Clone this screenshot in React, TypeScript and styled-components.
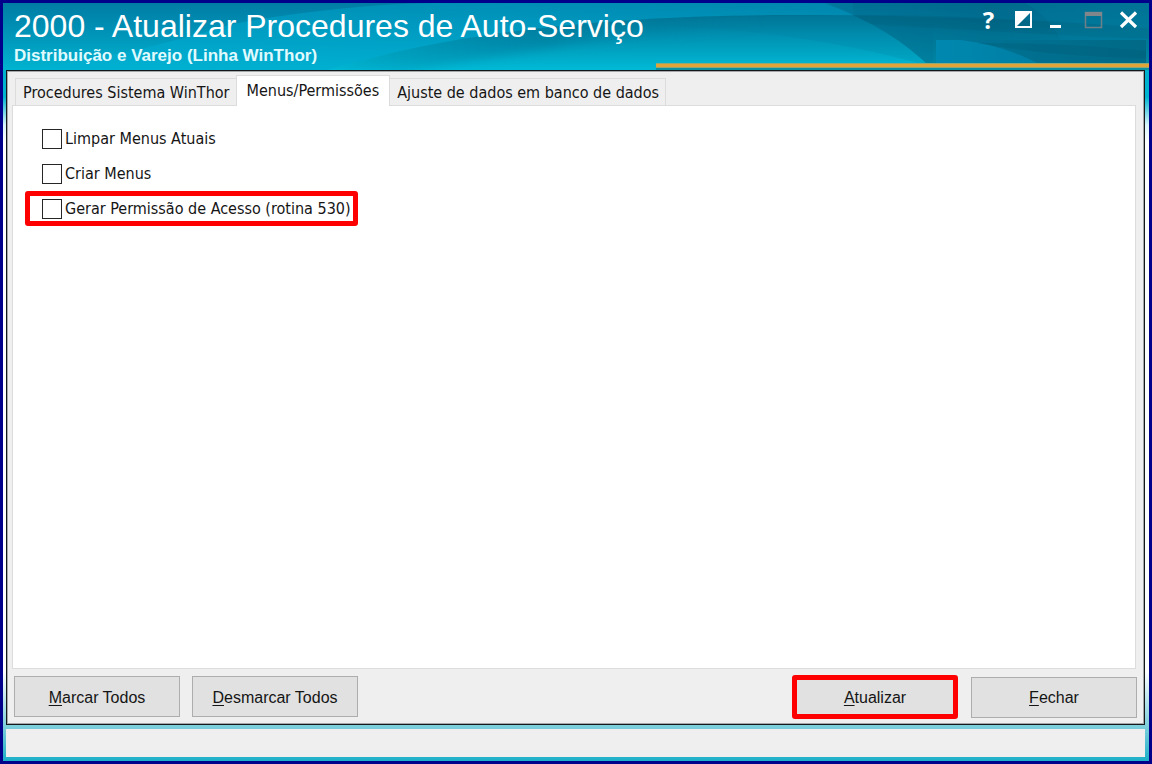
import React from "react";
import styled, { createGlobalStyle } from "styled-components";

const Global = createGlobalStyle`
  *, *::before, *::after { box-sizing: border-box; }
  body { margin: 0; }
`;

const uiFont = `"DejaVu Sans Condensed", "DejaVu Sans", Tahoma, sans-serif`;
const formFont = `"Liberation Sans", Arial, sans-serif`;

const Window = styled.div`
  display: flex;
  flex-direction: column;
  min-height: 100vh;
  border: 3px solid #00008b;
  padding: 0 4px 4px 3px;
  background: linear-gradient(
    #00a8c8 0,
    #00b4d0 94px,
    #d8f6fa 122px,
    #ffffff 140px,
    #ffffff calc(100% - 90px),
    #80d0dc calc(100% - 36px),
    #1cb0c8 100%
  );
  font-family: ${uiFont};
  font-size: 16px;
  color: #151515;
`;

const TitleBar = styled.header`
  position: relative;
  display: flex;
  justify-content: space-between;
  height: 67px;
  margin: 0 -4px 0 -3px;
  padding: 6px 8px 0 11px;
  color: #ffffff;
  font-family: ${formFont};
`;

const Waves = styled.svg`
  position: absolute;
  inset: 0;
  width: 100%;
  height: 100%;
`;

const Heading = styled.div`
  position: relative;
`;

const Title = styled.h1`
  margin: 0;
  font-size: 32px;
  line-height: 35px;
  font-weight: 400;
  white-space: nowrap;
`;

const Subtitle = styled.p`
  margin: 0;
  font-size: 17px;
  line-height: 24px;
  font-weight: 700;
  color: #e0fbff;
`;

const Controls = styled.div`
  position: relative;
  display: flex;
  height: 24px;
  gap: 10px;
`;

const ControlButton = styled.button`
  width: 25px;
  height: 24px;
  padding: 0 0 3px;
  border: 0;
  background: none;
  color: #ffffff;
  font-family: "Open Sans", sans-serif;
  font-size: 24px;
  line-height: 20px;
  font-weight: 700;
`;

const Glyph = styled.svg`
  display: block;
  width: 25px;
  height: 24px;
  margin-bottom: -3px;
`;

const Client = styled.main`
  flex: 1;
  display: flex;
  flex-direction: column;
  border: 1px solid #14181a;
  background: #efefef;
  box-shadow: inset 0 0 0 1px #a4a8a8;
  padding: 4px 7px 5px 5px;
`;

const TabList = styled.div`
  display: flex;
  align-items: flex-end;
  height: 30px;
  padding-left: 3px;
`;

const Tab = styled.button<{ $active?: boolean }>`
  position: relative;
  height: ${(p) => (p.$active ? 31 : 27)}px;
  padding: ${(p) => (p.$active ? "0 10px 2px" : "0 6px 0 7px")};
  margin-bottom: ${(p) => (p.$active ? -1 : 0)}px;
  border: 1px solid #dcdcdc;
  border-bottom: 0;
  border-right-width: ${(p) => (p.$active ? 1 : 0)}px;
  background: ${(p) => (p.$active ? "#ffffff" : "#efefef")};
  font: inherit;
  color: inherit;
  white-space: nowrap;
  z-index: ${(p) => (p.$active ? 1 : 0)};

  &:last-child {
    border-left-width: 0;
    border-right-width: 1px;
  }
`;

const Panel = styled.section`
  flex: 1;
  margin-right: 1px;
  border: 1px solid #dcdcdc;
  background: #ffffff;
  padding: 15px 12px;
`;

const Option = styled.label<{ $marked?: boolean }>`
  display: flex;
  align-items: center;
  gap: 3px;
  width: fit-content;
  height: 35px;
  padding: 0 2px 0 12px;
  border: 5px solid ${(p) => (p.$marked ? "#ff0000" : "transparent")};
  border-radius: 3px;
  white-space: nowrap;
`;

const Check = styled.input`
  appearance: none;
  width: 20px;
  height: 20px;
  margin: 0;
  border: 1px solid #262626;
  background: #ffffff;
`;

const Actions = styled.footer`
  display: flex;
  justify-content: space-between;
  align-items: flex-start;
  padding-top: 6px;
`;

const Group = styled.div`
  display: flex;
  align-items: center;
  gap: 12px;
  padding: 1px 0 0 2px;
`;

const PrimaryGroup = styled(Group)`
  padding: 0;
  gap: 13px;
`;

const Action = styled.button<{ $marked?: boolean }>`
  width: 166px;
  height: ${(p) => (p.$marked ? 44 : 41)}px;
  padding: 2px 0 0;
  border: ${(p) => (p.$marked ? "5px solid #ff0000" : "1px solid #adadad")};
  border-radius: ${(p) => (p.$marked ? 3 : 0)}px;
  background: #e1e1e1;
  font-family: ${formFont};
  font-size: 16px;
  color: inherit;
`;

const Key = styled.u`
  text-underline-offset: 2px;
`;

const StatusBar = styled.div`
  height: 28px;
  margin-top: 4px;
  background: #efefef;
`;

const HeaderArt = () => (
  <Waves viewBox="0 0 1146 67" preserveAspectRatio="none" aria-hidden="true">
    <defs>
      <linearGradient id="base" x1="0" y1="0" x2="0" y2="1">
        <stop offset="0" stopColor="#007ca4" />
        <stop offset="0.5" stopColor="#0096ba" />
        <stop offset="1" stopColor="#00b4d0" />
      </linearGradient>
      <linearGradient id="crest" x1="0" y1="0" x2="1" y2="0">
        <stop offset="0" stopColor="#00b0d4" stopOpacity="0.5" />
        <stop offset="0.6" stopColor="#00a8d0" stopOpacity="0.4" />
        <stop offset="1" stopColor="#0094bc" stopOpacity="0.4" />
      </linearGradient>
      <linearGradient id="sea" gradientUnits="userSpaceOnUse" x1="0" y1="12" x2="0" y2="67">
        <stop offset="0" stopColor="#007394" />
        <stop offset="0.35" stopColor="#008fb0" />
        <stop offset="1" stopColor="#00bad6" />
      </linearGradient>
      <linearGradient id="ridge" gradientUnits="userSpaceOnUse" x1="325" y1="0" x2="760" y2="0">
        <stop offset="0" stopColor="#007ea2" stopOpacity="0.1" />
        <stop offset="0.5" stopColor="#007698" stopOpacity="0.5" />
        <stop offset="1" stopColor="#007698" stopOpacity="0" />
      </linearGradient>
      <filter id="soft" x="-5%" y="-30%" width="110%" height="160%">
        <feGaussianBlur stdDeviation="5" />
      </filter>
      <clipPath id="seaClip">
        <path d="M325 67C450 29 600 13 780 12C910 12 1030 17 1146 24V67Z" />
      </clipPath>
      <linearGradient id="shade" gradientUnits="userSpaceOnUse" x1="822" y1="0" x2="1146" y2="0">
        <stop offset="0" stopColor="#006080" stopOpacity="0.4" />
        <stop offset="0.5" stopColor="#005c7c" stopOpacity="0.6" />
        <stop offset="1" stopColor="#006484" stopOpacity="0.6" />
      </linearGradient>
      <linearGradient id="slot" x1="0" y1="0" x2="1" y2="0">
        <stop offset="0" stopColor="#0088b0" />
        <stop offset="0.45" stopColor="#007fa4" />
        <stop offset="1" stopColor="#007492" />
      </linearGradient>
    </defs>
    <rect width="1146" height="67" fill="url(#base)" />
    <path d="M230 21C300 8 370 1 430 0H850V12C620 14 470 28 325 67H0C90 62 170 38 230 21Z" fill="url(#crest)" />
    <path d="M325 67C450 29 600 13 780 12C910 12 1030 17 1146 24V67Z" fill="url(#sea)" />
    <g clipPath="url(#seaClip)">
      <path d="M325 67C450 25 600 8 780 8V26C640 28 500 50 400 70Z" fill="url(#ridge)" filter="url(#soft)" />
    </g>
    <path d="M637 22C740 24 840 38 930 64V12C800 11 700 14 637 22Z" fill="#007c9e" fillOpacity="0.2" />
    <path d="M822 0C866 17 902 38 930 67H1146V0Z" fill="url(#shade)" />
    <path d="M849 12C950 12 1050 17 1146 26V36C1050 32 950 26 868 21Z" fill="#005c78" fillOpacity="0.25" />
    <path d="M1022 0C1040 10 1050 22 1058 37H1146V0Z" fill="#0088a8" fillOpacity="0.2" />
    <rect x="933" y="37" width="210" height="23" fill="url(#slot)" />
    <path d="M958 37C990 41 1015 50 1034 60H1143V37Z" fill="#005f7c" fillOpacity="0.5" />
    <path d="M975 40C1040 40 1090 43 1143 48V55C1080 54 1020 49 975 40Z" fill="#005874" fillOpacity="0.3" />
    <rect x="653" y="60" width="493" height="5" fill="#8fa878" />
    <rect x="653" y="61" width="493" height="3" fill="#dfa338" />
    <rect x="653" y="65" width="493" height="2" fill="#0a90a0" />
  </Waves>
);

const options = [
  { label: "Limpar Menus Atuais" },
  { label: "Criar Menus" },
  { label: "Gerar Permissão de Acesso (rotina 530)", marked: true },
];

export default function App() {
  return (
    <>
      <Global />
      <Window>
        <TitleBar>
          <HeaderArt />
          <Heading>
            <Title>2000 - Atualizar Procedures de Auto-Serviço</Title>
            <Subtitle>Distribuição e Varejo (Linha WinThor)</Subtitle>
          </Heading>
          <Controls>
            <ControlButton aria-label="Ajuda">?</ControlButton>
            <ControlButton aria-label="Alternar">
              <Glyph viewBox="0 0 25 24">
                <rect x="5" y="3" width="15" height="15" fill="none" stroke="#fff" strokeWidth="2" />
                <path d="M5 3H20L5 18Z" fill="#fff" />
              </Glyph>
            </ControlButton>
            <ControlButton aria-label="Minimizar">
              <Glyph viewBox="0 0 25 24">
                <rect x="4" y="16" width="11" height="3" fill="#fff" />
              </Glyph>
            </ControlButton>
            <ControlButton aria-label="Maximizar" disabled>
              <Glyph viewBox="0 0 25 24">
                <rect x="4.5" y="3.5" width="16" height="15" fill="none" stroke="#6f8088" strokeWidth="1.5" />
                <rect x="4" y="3" width="17" height="4" fill="#80868a" />
              </Glyph>
            </ControlButton>
            <ControlButton aria-label="Fechar janela">
              <Glyph viewBox="0 0 25 24">
                <path d="M5 3.500L20 18M20 3.500L5 18" stroke="#fff" strokeWidth="3.200" />
              </Glyph>
            </ControlButton>
          </Controls>
        </TitleBar>
        <Client>
          <TabList role="tablist">
            <Tab role="tab" aria-selected={false}>Procedures Sistema WinThor</Tab>
            <Tab role="tab" aria-selected $active>Menus/Permissões</Tab>
            <Tab role="tab" aria-selected={false}>Ajuste de dados em banco de dados</Tab>
          </TabList>
          <Panel role="tabpanel">
            {options.map((o) => (
              <Option key={o.label} $marked={o.marked}>
                <Check type="checkbox" />
                {o.label}
              </Option>
            ))}
          </Panel>
          <Actions>
            <Group>
              <Action><Key>M</Key>arcar Todos</Action>
              <Action><Key>D</Key>esmarcar Todos</Action>
            </Group>
            <PrimaryGroup>
              <Action $marked><Key>A</Key>tualizar</Action>
              <Action><Key>F</Key>echar</Action>
            </PrimaryGroup>
          </Actions>
        </Client>
        <StatusBar role="status" />
      </Window>
    </>
  );
}
